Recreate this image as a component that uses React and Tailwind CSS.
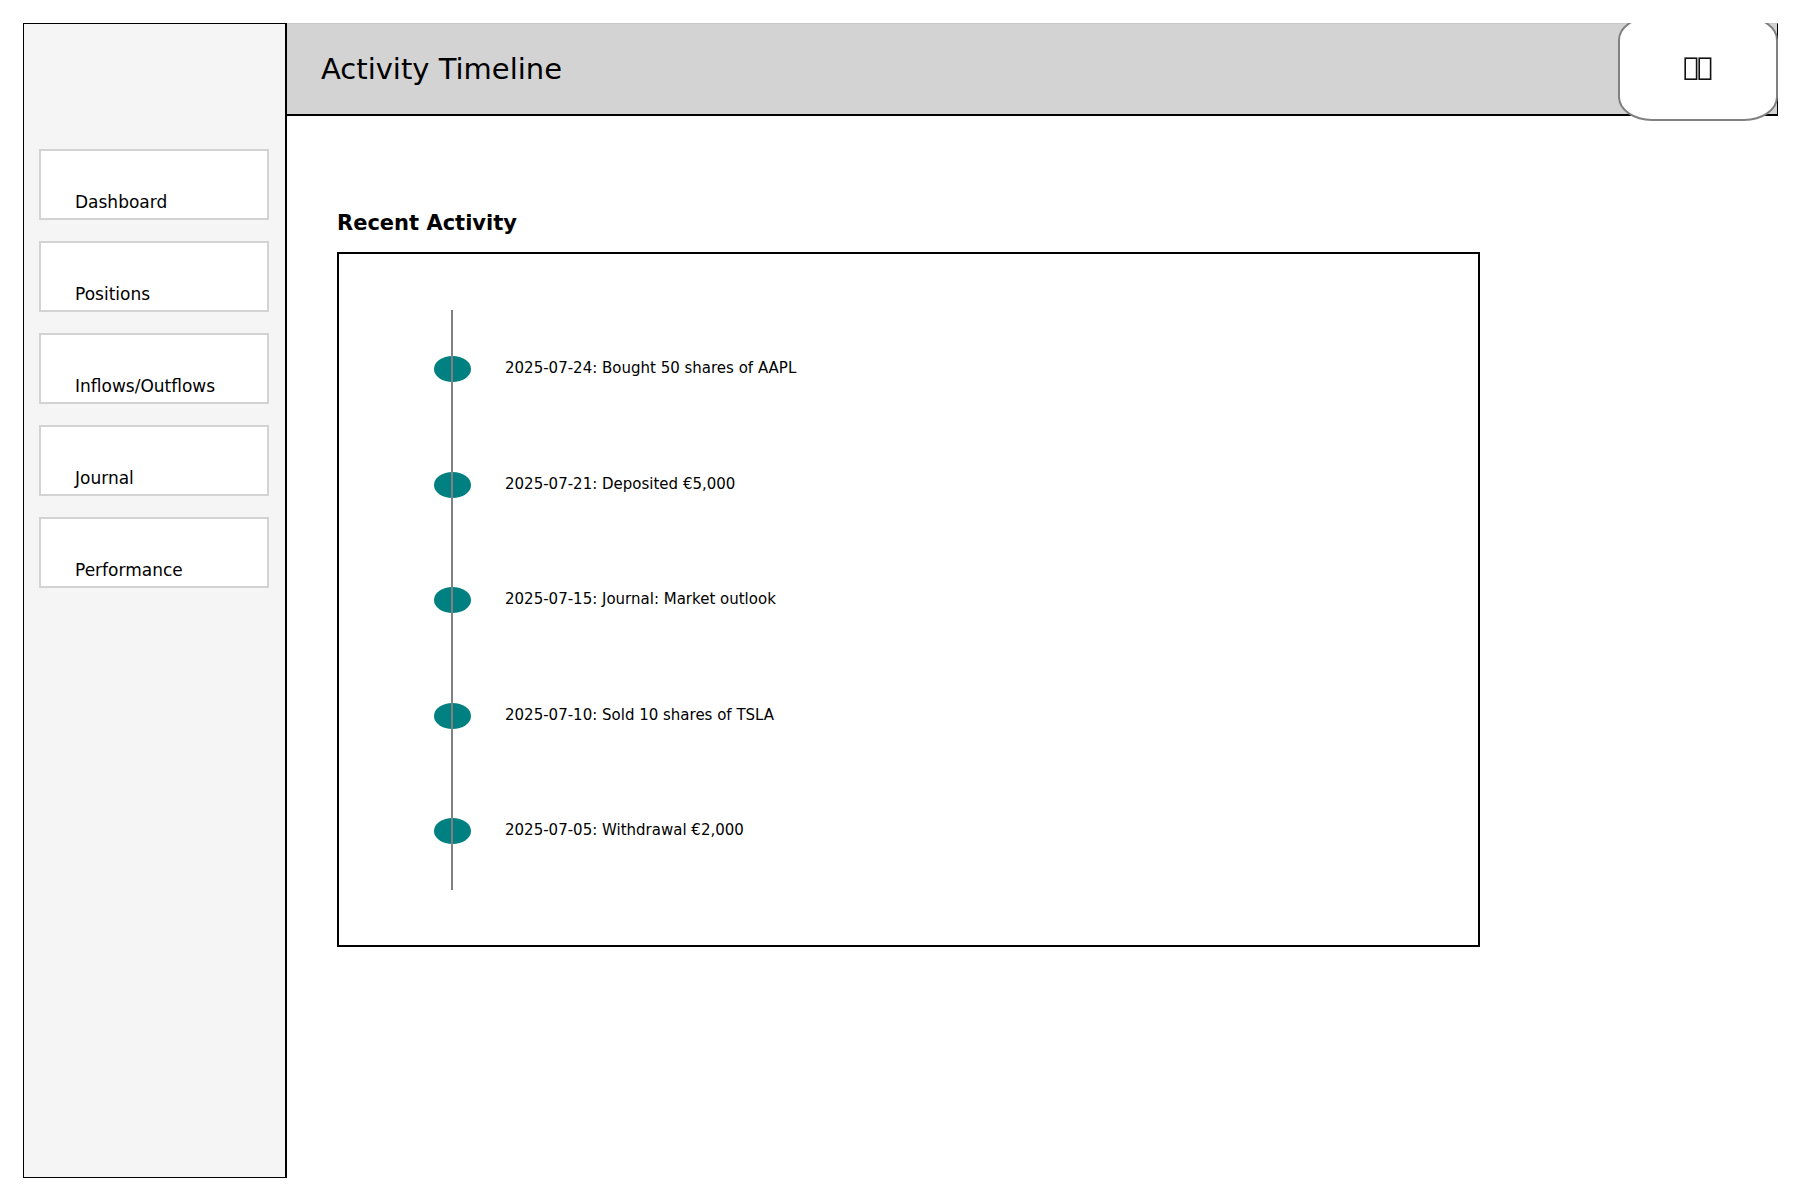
const navItems = ["Dashboard", "Positions", "Inflows/Outflows", "Journal", "Performance"];

const events = [
  { date: "2025-07-24", text: "Bought 50 shares of AAPL" },
  { date: "2025-07-21", text: "Deposited €5,000" },
  { date: "2025-07-15", text: "Journal: Market outlook" },
  { date: "2025-07-10", text: "Sold 10 shares of TSLA" },
  { date: "2025-07-05", text: "Withdrawal €2,000" },
];

function Sidebar() {
  return (
    <aside className="w-66 shrink-0 border border-r-2 border-black bg-[#f5f5f5] pt-[125px] pr-4 pl-[15px]">
      <nav className="flex flex-col gap-[21px]">
        {navItems.map((item) => (
          <button
            key={item}
            type="button"
            className="flex h-[71px] items-end border-2 border-[#d3d3d3] bg-white pb-1.5 pl-[34px] text-left text-[17px] leading-5"
          >
            {item}
          </button>
        ))}
      </nav>
    </aside>
  );
}

function ProfileButton() {
  return (
    <div className="absolute -top-px -right-px h-[98px] w-40 overflow-hidden">
      <button
        type="button"
        aria-label="Profile"
        className="-mt-[7px] flex h-[105px] w-full items-center justify-center rounded-[34px/24px] border-2 border-[#808080] bg-white"
      >
        <svg width="28" height="24" viewBox="0 0 28 24" fill="none" stroke="#111" strokeWidth="1.6" aria-hidden="true">
          <rect x="1.2" y="1.2" width="11.4" height="21" />
          <rect x="15.2" y="1.2" width="11.4" height="21" />
        </svg>
      </button>
    </div>
  );
}

function Timeline() {
  return (
    <div className="border-2 border-black px-24 pt-14 pb-[55px]">
      <div className="relative h-[580px]">
        <ol className="flex h-full flex-col justify-between py-[46px]">
          {events.map((event) => (
            <li key={event.date} className="-ml-px flex h-[26px] items-center gap-[34px]">
              <span className="h-[26px] w-[37px] shrink-0 rounded-[50%] bg-[#008080]" />
              <span className="pb-0.5 text-[15px] leading-5">
                {event.date}: {event.text}
              </span>
            </li>
          ))}
        </ol>
        <div className="absolute inset-y-0 left-4 w-0.5 bg-[#808080]" />
      </div>
    </div>
  );
}

export default function App() {
  return (
    <div className="flex min-h-screen bg-white pt-[23px] pr-[22px] pb-[22px] pl-[23px] font-['DejaVu_Sans',sans-serif] text-black">
      <Sidebar />
      <div className="flex min-w-0 flex-1 flex-col">
        <header className="relative flex h-[93px] items-center border-t border-r border-b-2 border-t-[#c8c8c8] border-r-black border-b-black bg-[#d3d3d3] pl-[34px]">
          <h1 className="text-[29px] leading-8">Activity Timeline</h1>
          <ProfileButton />
        </header>
        <main className="pt-[95px] pr-[298px] pl-[50px]">
          <h2 className="mb-[17px] text-[21px] leading-6 font-bold">Recent Activity</h2>
          <Timeline />
        </main>
      </div>
    </div>
  );
}
